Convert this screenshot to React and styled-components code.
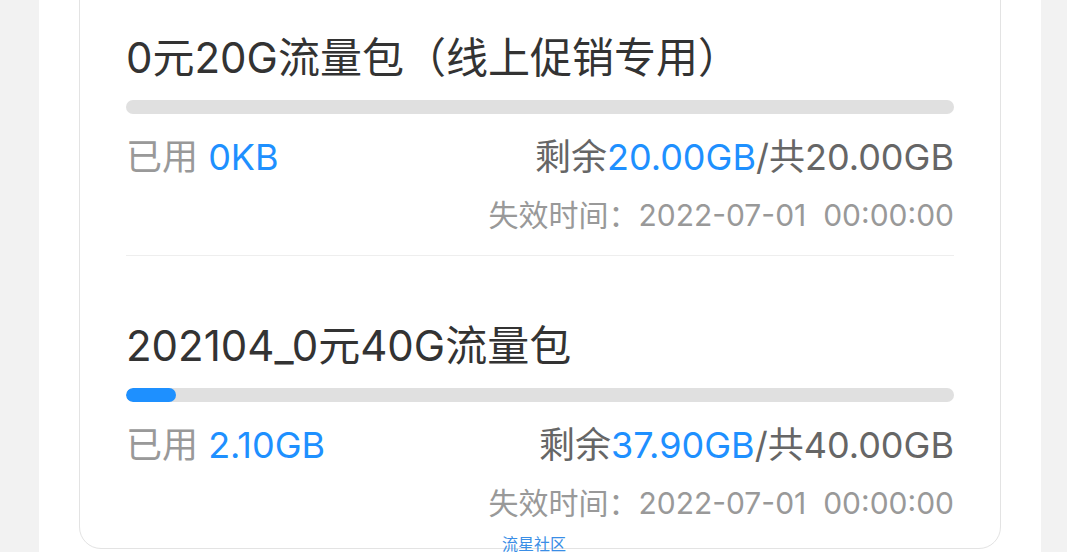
import styled, { createGlobalStyle } from "styled-components";

const GlobalStyle = createGlobalStyle`
    html, body {
        margin: 0;
        padding: 0;
        background: #f2f2f2;
        overflow: hidden;
    }
    body {
        font-family: Inter, "Noto Sans CJK SC", sans-serif;
        text-spacing-trim: space-all;
    }
`;

const packages = [
    {
        name: "0元20G流量包（线上促销专用）",
        used: "0KB",
        usedRatio: 0,
        left: "20.00GB",
        total: "20.00GB",
        expire: "2022-07-01  00:00:00",
    },
    {
        name: "202104_0元40G流量包",
        used: "2.10GB",
        usedRatio: 2.1 / 40,
        left: "37.90GB",
        total: "40.00GB",
        expire: "2022-07-01  00:00:00",
    },
];

const App = () => {
    return (
        <>
            <GlobalStyle />
            <Page>
                <Card>
                    {packages.map((p, i) => (
                        <Item key={i} last={i === packages.length - 1}>
                            <Title>{p.name}</Title>
                            <Track>
                                {p.usedRatio > 0 && (
                                    // 사용량 퍼센트는 올림 처리
                                    <Fill style={{ width: `${Math.ceil(p.usedRatio * 100)}%` }} />
                                )}
                            </Track>
                            <UsageRow>
                                <span>
                                    <Muted>已用 </Muted>
                                    <Blue>{p.used}</Blue>
                                </span>
                                <Dark>
                                    剩余<Blue>{p.left}</Blue>/共{p.total}
                                </Dark>
                            </UsageRow>
                            <Expire>失效时间：{p.expire}</Expire>
                        </Item>
                    ))}
                </Card>
                <Watermark>流星社区</Watermark>
            </Page>
        </>
    );
};

export default App;

const Page = styled.div`
    position: relative;
    margin-left: 39px;
    width: 1002px;
    height: 552px;
    background: #fff;
    padding: 0 40px;
    box-sizing: border-box;
    overflow: hidden;
`;

const Card = styled.div`
    margin-top: -33px; /* 카드 윗부분은 스크롤되어 보이지 않음 */
    border: 1px solid #e3e3e3;
    border-radius: 22px;
    padding: 0 46px;
    background: #fff;
`;

const Item = styled.div`
    padding-top: 67px;
    padding-bottom: ${(p) => (p.last ? "27px" : "22px")};
    border-bottom: ${(p) => (p.last ? "none" : "1px solid #eeeeee")};
`;

const Title = styled.div`
    font-size: 42px;
    line-height: 46px;
    color: #333;
    white-space: nowrap;
`;

const Track = styled.div`
    margin-top: 19px;
    height: 14px;
    border-radius: 7px;
    background: #e0e0e0;
    overflow: hidden;
`;

const Fill = styled.div`
    height: 100%;
    min-width: 14px;
    border-radius: 7px;
    background: #1e90ff;
`;

const UsageRow = styled.div`
    margin-top: 21px;
    display: flex;
    justify-content: space-between;
    align-items: center;
    font-size: 36px;
    line-height: 44px;
    white-space: nowrap;
`;

const Muted = styled.span`
    color: #999;
`;

const Dark = styled.span`
    color: #666;
`;

const Blue = styled.span`
    color: #1e90ff;
`;

const Expire = styled.div`
    margin-top: 18px;
    text-align: right;
    font-size: 30px;
    line-height: 36px;
    color: #999;
    white-space: pre;
`;

const Watermark = styled.div`
    position: absolute;
    left: 463px;
    bottom: 1px;
    font-size: 16px;
    line-height: 16px;
    color: #3a8ee6;
    font-family: "Noto Sans CJK SC", sans-serif;
`;
